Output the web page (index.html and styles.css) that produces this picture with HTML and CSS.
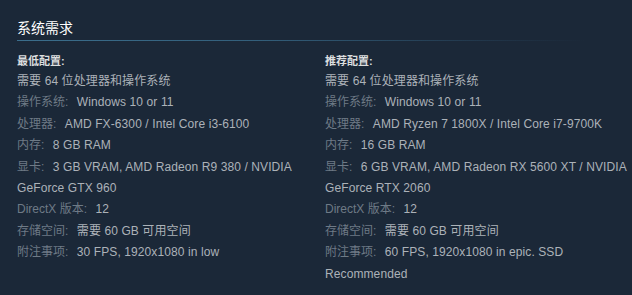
FILE: index.html
```html
<!DOCTYPE html>
<html lang="zh-CN">
<head>
<meta charset="utf-8">
<link rel="stylesheet" href="styles.css">
</head>
<body>
<div class="sysreq">
  <h2 class="title">系统需求</h2>
  <div class="rule"></div>
  <div class="cols">
    <div class="col">
      <div class="head">最低配置:</div>
      <ul class="list">
        <li>需要 64 位处理器和操作系统</li>
        <li><span class="lbl">操作系统:</span> Windows 10 or 11</li>
        <li><span class="lbl">处理器:</span> AMD FX-6300 / Intel Core i3-6100</li>
        <li><span class="lbl">内存:</span> 8 GB RAM</li>
        <li><span class="lbl">显卡:</span> 3 GB VRAM, AMD Radeon R9 380 / NVIDIA GeForce GTX 960</li>
        <li><span class="lbl">DirectX 版本:</span> 12</li>
        <li><span class="lbl">存储空间:</span> 需要 60 GB 可用空间</li>
        <li><span class="lbl">附注事项:</span> 30 FPS, 1920x1080 in low</li>
      </ul>
    </div>
    <div class="col">
      <div class="head">推荐配置:</div>
      <ul class="list">
        <li>需要 64 位处理器和操作系统</li>
        <li><span class="lbl">操作系统:</span> Windows 10 or 11</li>
        <li><span class="lbl">处理器:</span> AMD Ryzen 7 1800X / Intel Core i7-9700K</li>
        <li><span class="lbl">内存:</span> 16 GB RAM</li>
        <li><span class="lbl">显卡:</span> 6 GB VRAM, AMD Radeon RX 5600 XT / NVIDIA GeForce RTX 2060</li>
        <li><span class="lbl">DirectX 版本:</span> 12</li>
        <li><span class="lbl">存储空间:</span> 需要 60 GB 可用空间</li>
        <li><span class="lbl">附注事项:</span> 60 FPS, 1920x1080 in epic. SSD Recommended</li>
      </ul>
    </div>
  </div>
</div>
</body>
</html>
```
FILE: styles.css
```css
html, body {
  margin: 0;
  padding: 0;
  background: #1b2838;
}
body {
  font-family: "Liberation Sans", Arial, "Noto Sans CJK SC", sans-serif;
  color: #acb2b8;
  width: 632px;
  height: 295px;
  overflow: hidden;
}
.sysreq {
  padding: 18px 0 0 17px;
}
.title {
  margin: 0;
  font-size: 14px;
  line-height: 20px;
  font-weight: normal;
  color: #ffffff;
}
.rule {
  margin-top: 2px;
  height: 1px;
  width: 598px;
  background: linear-gradient(to right, #3b6e8c 0%, #335f7b 40%, rgba(40, 70, 95, 0.4) 80%, rgba(27, 40, 56, 0) 95%);
}
.cols {
  display: grid;
  grid-template-columns: 308px 1fr;
  margin-top: 13px;
}
.head {
  font-size: 11px;
  line-height: 14px;
  font-weight: bold;
  color: #dcdedf;
}
.list {
  list-style: none;
  margin: 3px 0 0 0;
  padding: 0;
  font-size: 12px;
  line-height: 21.4px;
  letter-spacing: 0.1px;
}
.lbl {
  color: #6e7a86;
  letter-spacing: 0;
  margin-right: 5px;
}
```
